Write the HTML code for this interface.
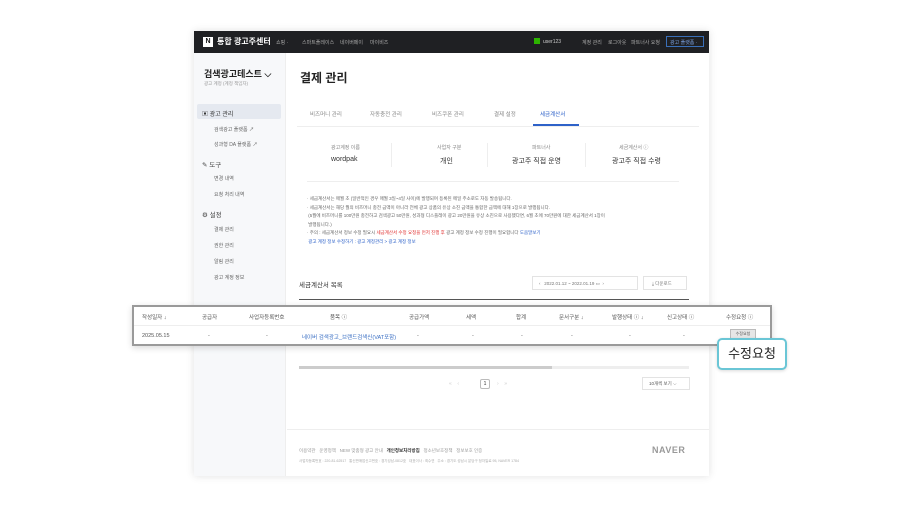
<!DOCTYPE html>
<html><head><meta charset="utf-8"><style>
*{box-sizing:border-box;margin:0;padding:0}
body{width:903px;height:506px;background:#fff;font-family:"Liberation Sans","Noto Sans CJK KR",sans-serif;position:relative;overflow:hidden;color:#333}
.frame{position:absolute;left:194px;top:31px;width:515px;height:445px;background:#fff;box-shadow:0 0 8px rgba(0,0,0,.12);overflow:hidden}
.top{position:absolute;left:0;top:0;width:515px;height:22px;background:#1f2023;color:#aaa;font-size:5px}
.top .logo{position:absolute;left:9px;top:6px;width:10px;height:10px;background:#fff;color:#111;font-size:7px;font-weight:bold;text-align:center;line-height:10px}
.top .t{position:absolute;top:5px;color:#fff;font-size:8px;font-weight:bold;left:23px}
.top span{position:absolute;top:8px}
.side{position:absolute;left:0;top:22px;width:92px;height:423px;background:#f7f8fa;border-right:1px solid #eee}
.side div{position:absolute;font-size:5px;color:#666}
.main{position:absolute;left:93px;top:22px;width:422px;height:423px}
.main div{position:absolute}
.sm{font-size:5px;color:#888}
.foot{position:absolute;left:93px;top:398px;width:422px;height:47px;border-top:1px solid #eee}
.zoom{position:absolute;left:132px;top:305px;width:640px;height:41px;background:#fff;border:2px solid #9a9a9a;box-shadow:0 2px 6px rgba(0,0,0,.15);font-size:5.5px;color:#555}
.zoom span{position:absolute}
.call{position:absolute;left:717px;top:338px;width:70px;height:32px;background:#fff;border:2px solid #6ac6d6;border-radius:5px;font-size:13px;color:#222;text-align:center;line-height:28px;box-shadow:0 1px 3px rgba(0,0,0,.15)}
</style></head><body>
<div class="frame">
 <div class="top"><div class="logo">N</div><div class="t">통합 광고주센터</div>
  <span style="left:82px">쇼핑 ·</span><span style="left:108px">스마트플레이스</span><span style="left:146px">네이버페이</span><span style="left:176px">마이비즈</span>
  <span style="left:340px;top:7px;width:6px;height:6px;background:#2db400"></span><span style="left:349px;color:#ccc">user123</span><span style="left:388px">계정 관리</span><span style="left:414px">로그아웃</span><span style="left:437px">파트너사 요청</span>
  <span style="left:472px;top:5px;width:38px;height:11px;border:1px solid #3a6fb8;color:#7aa0e0;padding:2px 3px">광고 플랫폼 ·</span></div>
 <div class="side">
  <div style="left:10px;top:14px;font-size:9px;font-weight:bold;color:#222">검색광고테스트 ⌵</div>
  <div style="left:10px;top:28px;font-size:4.5px;color:#999">광고 계정 (계정 책임자)</div>
  <div style="left:3px;top:51px;width:84px;height:15px;background:#e5e9f0;border-radius:2px"></div>
  <div style="left:8px;top:56px;font-size:6px;color:#333">▣ 광고 관리</div>
  <div style="left:20px;top:73px">검색광고 플랫폼 ↗</div>
  <div style="left:20px;top:88px">성과형 DA 플랫폼 ↗</div>
  <div style="left:8px;top:106px;font-size:6.5px;color:#444">✎ 도구</div>
  <div style="left:20px;top:122px">변경 내역</div>
  <div style="left:20px;top:138px">요청 처리 내역</div>
  <div style="left:8px;top:156px;font-size:6.5px;color:#444">⚙ 설정</div>
  <div style="left:20px;top:173px">결제 관리</div>
  <div style="left:20px;top:189px">권한 관리</div>
  <div style="left:20px;top:205px">알림 관리</div>
  <div style="left:20px;top:221px">광고 계정 정보</div>
 </div>
 <div class="main">
  <div style="left:13px;top:16px;font-size:12px;font-weight:bold;color:#222">결제 관리</div>
  <div style="left:10px;top:73px;width:402px;height:1px;background:#eee"></div>
  <div class="sm" style="left:23px;top:57px;font-size:5.5px">비즈머니 관리</div>
  <div class="sm" style="left:83px;top:57px;font-size:5.5px">자동충전 관리</div>
  <div class="sm" style="left:145px;top:57px;font-size:5.5px">비즈쿠폰 관리</div>
  <div class="sm" style="left:207px;top:57px;font-size:5.5px">결제 설정</div>
  <div style="left:253px;top:57px;font-size:5.5px;color:#2e62c9">세금계산서</div>
  <div style="left:246px;top:71px;width:46px;height:2px;background:#2e62c9"></div>
  <div class="sm" style="left:44px;top:91px">광고계정 이름</div><div style="left:44px;top:103px;font-size:7px;color:#333">wordpak</div>
  <div class="sm" style="left:150px;top:91px">사업자 구분</div><div style="left:153px;top:103px;font-size:7px;color:#333">개인</div>
  <div class="sm" style="left:245px;top:91px">파트너사</div><div style="left:225px;top:103px;font-size:7px;color:#333">광고주 직접 운영</div>
  <div class="sm" style="left:332px;top:91px">세금계산서 ⓘ</div><div style="left:325px;top:103px;font-size:7px;color:#333">광고주 직접 수령</div>
  <div style="top:90px;width:1px;height:24px;background:#eee;left:104px"></div>
  <div style="left:200px;top:90px;width:1px;height:24px;background:#eee"></div>
  <div style="left:298px;top:90px;width:1px;height:24px;background:#eee"></div>
  <div style="left:20px;top:128px;width:372px;height:1px;background:#eee"></div>
  <div class="sm" style="left:20px;top:142px;font-size:4.5px;line-height:8.5px;width:380px;color:#666">· 세금계산서는 매월 초 (일반적인 경우 매월 3일~4일 사이)에 발행되며 등록된 메일 주소로도 자동 발송됩니다.<br>· 세금계산서는 해당 월의 비즈머니 충전 금액이 아니라 전체 광고 상품의 유상 소진 금액을 통합한 금액에 대해 1장으로 발행됩니다.<br>&nbsp;(5월에 비즈머니를 100만원 충전하고 검색광고 50만원, 성과형 디스플레이 광고 20만원을 유상 소진으로 사용했다면, 6월 초에 70만원에 대한 세금계산서 1장이<br>&nbsp;발행됩니다.)<br>· 주의 : 세금계산서 정보 수정 필요시 <span style="color:#e03030">세금계산서 수정 요청을 먼저 진행 후</span> 광고 계정 정보 수정 진행이 필요합니다 <span style="color:#2e62c9">도움말보기</span><br><span style="color:#2e62c9">&nbsp;광고 계정 정보 수정하기 : 광고 계정관리 &gt; 광고 계정 정보</span></div>
  <div style="left:12px;top:226px;font-size:6.5px;color:#333">세금계산서 목록</div>
  <div style="left:245px;top:223px;width:106px;height:14px;border:1px solid #e3e3e3;font-size:4.5px;color:#777;padding:4px 6px">‹ &nbsp; 2022.01.12 ~ 2022.01.19 ▭ &nbsp;›</div>
  <div style="left:356px;top:223px;width:44px;height:14px;border:1px solid #e3e3e3;font-size:4.5px;color:#777;padding:4px 8px">⤓ 다운로드</div>
  <div style="left:12px;top:246px;width:390px;height:1px;background:#555"></div>
  <div style="left:12px;top:313px;width:390px;height:3px;background:#eee"></div>
  <div style="left:12px;top:313px;width:253px;height:3px;background:#ccc"></div>
  <div style="left:162px;top:328px;font-size:5px;color:#ccc">«&nbsp;&nbsp;&nbsp;&nbsp;‹</div>
  <div style="left:193px;top:326px;width:10px;height:10px;border:1px solid #bbb;border-radius:2px;font-size:5px;text-align:center;line-height:8px">1</div>
  <div style="left:210px;top:328px;font-size:5px;color:#ccc">›&nbsp;&nbsp;&nbsp;&nbsp;»</div>
  <div style="left:355px;top:324px;width:48px;height:13px;border:1px solid #e3e3e3;font-size:4.5px;color:#555;padding:3px 6px">10개씩 보기 ⌵</div>
 </div>
 <div class="foot">
  <div style="position:absolute;left:12px;top:18px;font-size:4.5px;color:#999">이용약관 &nbsp; 운영정책 &nbsp; NEW 맞춤형 광고 안내 &nbsp; <b style="color:#333">개인정보처리방침</b> &nbsp; 청소년보호정책 &nbsp; 정보보호 인증</div>
  <div style="position:absolute;left:12px;top:29px;font-size:3.5px;color:#aaa">사업자등록번호 : 220-81-62517 &nbsp; 통신판매업신고번호 : 경기성남-0812호 &nbsp; 대표이사 : 최수연 &nbsp; 주소 : 경기도 성남시 분당구 정자일로 95, NAVER 1784</div>
  <div style="position:absolute;left:365px;top:15px;font-size:9px;font-weight:bold;color:#999;letter-spacing:.5px">NAVER</div>
 </div>
</div>
<div class="zoom">
 <span style="left:8px;top:6px">작성일자 ↓</span><span style="left:68px;top:6px">공급자</span><span style="left:115px;top:6px">사업자등록번호</span><span style="left:196px;top:6px">품목 ⓘ</span><span style="left:275px;top:6px">공급가액</span><span style="left:332px;top:6px">세액</span><span style="left:382px;top:6px">합계</span><span style="left:425px;top:6px">문서구분 ↓</span><span style="left:478px;top:6px">발행상태 ⓘ ↓</span><span style="left:533px;top:6px">신고상태 ⓘ</span><span style="left:592px;top:6px">수정요청 ⓘ</span>
 <span style="left:0;top:18px;width:636px;height:1px;background:#eee"></span>
 <span style="left:8px;top:26px">2025.05.15</span><span style="left:74px;top:26px">-</span><span style="left:132px;top:26px">-</span><span style="left:168px;top:26px;color:#3a6fc4">네이버 검색광고_브랜드검색신(VAT포함)</span><span style="left:283px;top:26px">-</span><span style="left:338px;top:26px">-</span><span style="left:387px;top:26px">-</span><span style="left:437px;top:26px">-</span><span style="left:495px;top:26px">-</span><span style="left:549px;top:26px">-</span>
 <span style="left:596px;top:22px;width:26px;height:10px;background:#e6e6e6;border:1px solid #bbb;font-size:4px;text-align:center;line-height:8px">수정요청</span>
</div>
<div class="call">수정요청</div>
</body></html>
